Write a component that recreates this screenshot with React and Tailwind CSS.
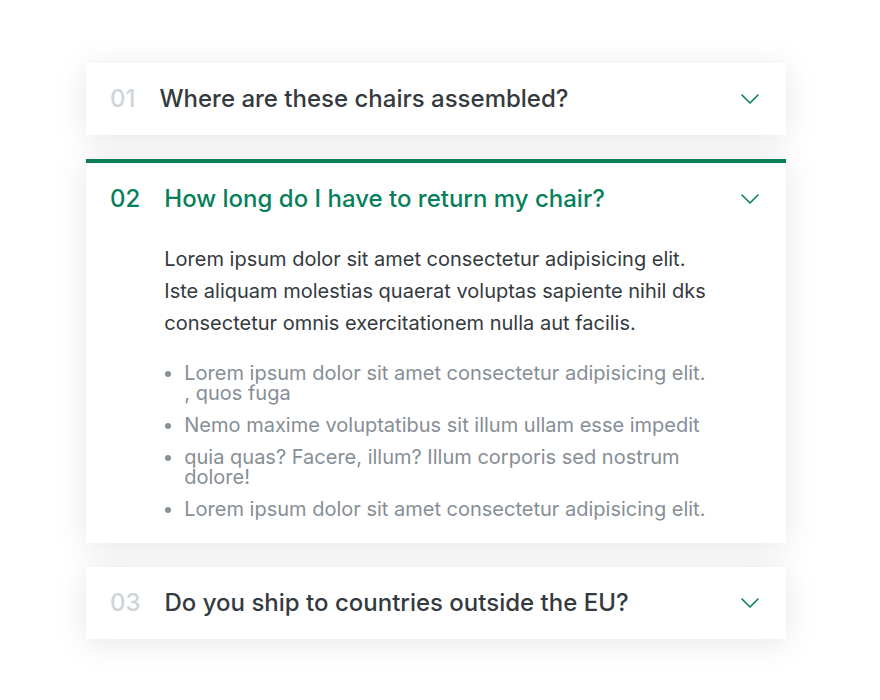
import { useState } from 'react';

const items = [
  {
    num: '01',
    title: 'Where are these chairs assembled?',
  },
  {
    num: '02',
    title: 'How long do I have to return my chair?',
  },
  {
    num: '03',
    title: 'Do you ship to countries outside the EU?',
  },
];

function Chevron() {
  return (
    <svg className="h-6 w-6 text-[#087f5b]" viewBox="0 0 24 24" fill="none" stroke="currentColor" strokeWidth="1.6" strokeLinecap="round" strokeLinejoin="round">
      <path d="M4 8l8 8 8-8" />
    </svg>
  );
}

function Item({ num, title, open, onToggle }) {
  return (
    <div
      className={`bg-white shadow-[0_4px_32px_rgba(0,0,0,0.1)] ${
        open ? 'border-t-4 border-[#087f5b]' : ''
      }`}
    >
      <button
        onClick={onToggle}
        className="grid w-full grid-cols-[auto_1fr_auto] items-center gap-6 px-6 h-[72px] text-left cursor-pointer"
      >
        <span className={`text-2xl font-medium ${open ? 'text-[#087f5b]' : 'text-[#ced4da]'}`}>{num}</span>
        <span className={`text-2xl font-medium ${open ? 'text-[#087f5b]' : 'text-[#343a40]'}`}>{title}</span>
        <Chevron />
      </button>
      {open && (
        <div className="grid grid-cols-[auto_1fr_auto] gap-6 px-6 pt-2 pb-6">
          <span className="invisible text-2xl font-medium">{num}</span>
          <div>
            <p className="text-xl leading-8 text-[#343a40] mb-6">
              Lorem ipsum dolor sit amet consectetur adipisicing elit. Iste aliquam molestias quaerat voluptas sapiente nihil dks consectetur omnis exercitationem nulla aut facilis.
            </p>
            <ul className="list-disc pl-5 text-xl leading-5 text-[#868e96] flex flex-col gap-3">
              <li>Lorem ipsum dolor sit amet consectetur adipisicing elit. , quos fuga</li>
              <li>Nemo maxime voluptatibus sit illum ullam esse impedit</li>
              <li>quia quas? Facere, illum? Illum corporis sed nostrum dolore!</li>
              <li>Lorem ipsum dolor sit amet consectetur adipisicing elit.</li>
            </ul>
          </div>
          <span className="w-6" />
        </div>
      )}
    </div>
  );
}

export default function App() {
  const [openIdx, setOpenIdx] = useState(1);

  return (
    <div className="min-h-[700px] bg-white pt-[63px] pl-[86px] font-['Inter',sans-serif]">
      <div className="w-[700px] flex flex-col gap-6">
        {items.map((item, i) => (
          <Item
            key={item.num}
            {...item}
            open={openIdx === i}
            onToggle={() => setOpenIdx(openIdx === i ? null : i)}
          />
        ))}
      </div>
    </div>
  );
}
